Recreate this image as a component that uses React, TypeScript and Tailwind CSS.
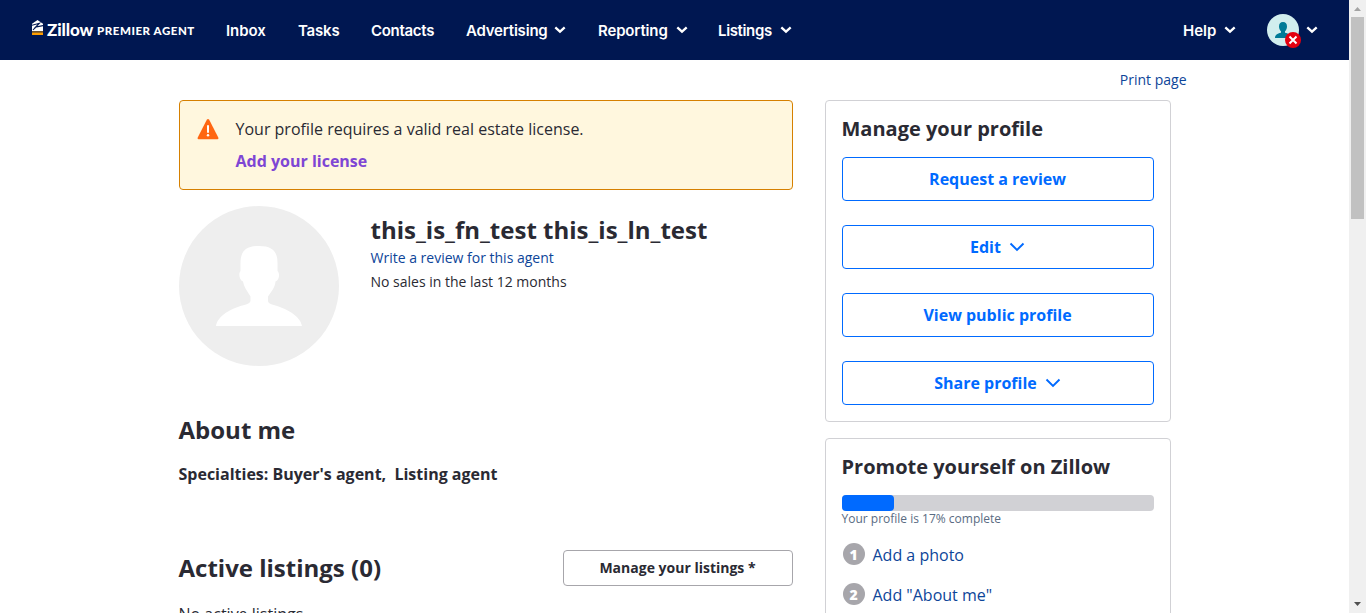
import React from "react";

function NavChevron() {
  return (
    <svg width="12" height="8" viewBox="0 0 12 8" fill="none" className="shrink-0">
      <path d="M1.3 1.4 L6 5.7 L10.7 1.4" stroke="#fff" strokeWidth="2.3" />
    </svg>
  );
}

function NavItem({ label, width, menu }: { label: string; width: string; menu?: boolean }) {
  return (
    <a className="flex items-center gap-2">
      <span className={`${width} pt-[3px] whitespace-nowrap`}>{label}</span>
      {menu && <NavChevron />}
    </a>
  );
}

function Logo() {
  return (
    <div className="flex h-4 w-[163px] items-center whitespace-nowrap">
      <svg width="11" height="16" viewBox="0 0 11 16" className="mr-1 shrink-0">
        <path d="M5.5 0 L11 3.8 V11 H0 V3.8 Z" fill="#fff" />
        <path d="M0 5.2 L7.4 3.2 L3.6 7.1 L11 5.6 M1 9.9 L4.8 6.3" stroke="#001751" strokeWidth="1.1" fill="none" />
        <rect y="11" width="11" height="1.5" fill="#6b532f" />
        <rect y="12.5" width="11" height="2.5" fill="#ff9e00" />
      </svg>
      <span className="w-[47px] pt-[3px] text-[17px] leading-4 font-black tracking-[-0.1px]">Zillow</span>
      <span className="ml-[3px] pt-[5px] text-[11.5px] leading-4 font-black tracking-[0.55px]">PREMIER AGENT</span>
    </div>
  );
}

function Header() {
  return (
    <header className="flex h-[60px] items-center bg-[#001751] pr-[31px] pl-8 font-[Inter,sans-serif] text-[15px] font-semibold text-white">
      <div className="-mt-[4px] font-[Lato,sans-serif]"><Logo /></div>
      <nav className="ml-[31px] flex items-center gap-8">
        <NavItem label="Inbox" width="w-10 tracking-[-0.05px]" />
        <NavItem label="Tasks" width="w-[41px] tracking-[-0.2px]" />
        <NavItem label="Contacts" width="w-[63px] tracking-[-0.3px]" />
        <NavItem label="Advertising" width="w-[80px] tracking-[-0.2px]" menu />
        <NavItem label="Reporting" width="w-[69.5px] tracking-[-0.15px]" menu />
        <NavItem label="Listings" width="-ml-[1.5px] w-[54px] tracking-[-0.35px]" menu />
      </nav>
      <div className="ml-auto flex items-center">
        <NavItem label="Help" width="w-[33px]" menu />
        <div className="relative ml-[31px] h-8 w-8">
          <svg width="32" height="32" viewBox="0 0 32 32">
            <circle cx="16" cy="16" r="16" fill="#d1eeee" />
            <path d="M16 8c2.700 0 4 1.700 4 4.400 0 2-.9 3.900-2 4.900v1.500c3.800.7 6 2.200 6 5.200H8c0-3 2.200-4.500 6-5.200v-1.500c-1.100-1-2-2.900-2-4.900C12 9.700 13.300 8 16 8Z" fill="#007b97" />
          </svg>
          <svg width="16" height="16" viewBox="0 0 16 16" className="absolute top-[18px] left-[18px]">
            <circle cx="8" cy="8" r="8" fill="#e4000f" />
            <path d="M4.5 4.5 L11.5 11.5 M11.5 4.5 L4.5 11.5" stroke="#fff" strokeWidth="2" />
          </svg>
        </div>
        <span className="ml-[7px] flex"><NavChevron /></span>
      </div>
    </header>
  );
}

function OutlineButton({ children, menu }: { children: React.ReactNode; menu?: boolean }) {
  return (
    <button className="flex h-11 w-full items-center justify-center rounded-[4px] border border-[#006aff] font-bold text-[#006aff]">
      {children}
      {menu && (
        <svg width="16" height="10" viewBox="0 0 16 10" fill="none" className="ml-2">
          <path d="M1.5 1.5 L8 8 L14.5 1.5" stroke="#006aff" strokeWidth="1.9" />
        </svg>
      )}
    </button>
  );
}

function Step({ n, label }: { n: number; label: string }) {
  return (
    <li className="flex h-10 items-start">
      <span className="ml-[1px] flex h-[22px] w-[22px] items-center justify-center rounded-full bg-[#a7a6ab] text-[14px] font-extrabold text-white">{n}</span>
      <a className="ml-2 leading-6 text-[#0d4599]">{label}</a>
    </li>
  );
}

function Sidebar() {
  return (
    <aside className="flex w-[346px] shrink-0 flex-col gap-4">
      <section className="h-[322px] rounded-[4px] border border-[#d1d1d5] px-4 pt-3">
        <h2 className="text-xl leading-8 font-bold">Manage your profile</h2>
        <div className="mt-3 flex flex-col gap-6">
          <OutlineButton>Request a review</OutlineButton>
          <OutlineButton menu>Edit</OutlineButton>
          <OutlineButton>View public profile</OutlineButton>
          <OutlineButton menu>Share profile</OutlineButton>
        </div>
      </section>
      <section className="h-[400px] rounded-[4px] border border-[#d1d1d5] px-4 pt-3">
        <h2 className="text-xl leading-8 font-bold">Promote yourself on Zillow</h2>
        <div className="mt-3 h-4 rounded-[4px] bg-[#d1d1d5]">
          <div className="h-4 w-[52px] rounded-[4px] bg-[#006aff]" />
        </div>
        <p className="text-xs leading-4 text-[#596b82]">Your profile is 17% complete</p>
        <ul className="mt-4">
          <Step n={1} label="Add a photo" />
          <Step n={2} label={'Add "About me"'} />
        </ul>
      </section>
    </aside>
  );
}

function LicenseAlert() {
  return (
    <div className="flex h-[90px] rounded-[4px] border border-[#d68000] bg-[#fff7de] pt-4 pl-[17px]">
      <svg width="22" height="21" viewBox="0 0 22 21" className="mt-[2px] shrink-0">
        <path d="M9.8 0.8 Q11 -0.7 12.2 0.8 L21.4 18.8 Q21.7 20.2 20.4 20.2 H1.6 Q0.3 20.2 0.6 18.8 Z" fill="#ff6712" />
        <path d="M11 7v6" stroke="#fff" strokeWidth="2" strokeLinecap="round" />
        <circle cx="11" cy="16.3" r="1.2" fill="#fff" />
      </svg>
      <div className="ml-[17px]">
        <p className="leading-6">Your profile requires a valid real estate license.</p>
        <a className="mt-2 block leading-6 font-bold text-[#7e46d4]">Add your license</a>
      </div>
    </div>
  );
}

function Profile() {
  return (
    <div className="mt-4 flex h-[160px]">
      <svg width="160" height="160" viewBox="0 0 160 160" className="shrink-0">
        <circle cx="80" cy="80" r="80" fill="#eee" />
        <path d="M80 40C67 40 61.5 45 61.5 57V65C59.5 67 60 74 64 75.5C65 81 68 85 71.5 90.5V95Q71 97 67 98.500C52 102 38.500 110 37 120H123C121.500 110 107 102 93 98.500Q89 97 89 95V90.500C93 85 96 81 96.500 75.500C100.500 74 101 67 98.500 65V57C98.500 45 93 40 80 40Z" fill="#fff" />
      </svg>
      <div className="ml-8 pt-2">
        <h1 className="text-2xl leading-8 font-bold">this_is_fn_test this_is_ln_test</h1>
        <a className="block text-sm leading-6 text-[#0d4599]">Write a review for this agent</a>
        <p className="text-sm leading-6">No sales in the last 12 months</p>
      </div>
    </div>
  );
}

function Scrollbar() {
  return (
    <div className="flex w-[17px] shrink-0 flex-col items-center bg-[#f0f0f0]">
      <svg width="17" height="17" viewBox="0 0 17 17"><path d="M5 11 L8.5 7 L12 11Z" fill="#a3a3a3" /></svg>
      <div className="h-[202px] w-[13px] bg-[#c1c1c1]" />
      <svg width="17" height="17" viewBox="0 0 17 17" className="mt-auto"><path d="M5 6 L8.5 10 L12 6Z" fill="#505050" /></svg>
    </div>
  );
}

export default function App() {
  return (
    <div className="flex h-[613px] w-[1366px] overflow-hidden bg-white font-['Open_Sans',sans-serif] text-base text-[#2a2a33]">
      <div className="h-full w-[1349px] shrink-0 overflow-hidden">
        <Header />
        <div className="flex h-10 items-center justify-end pr-[162.5px] text-sm text-[#0d4599]"><a>Print page</a></div>
        <div className="flex gap-8 pl-[178.5px]">
          <main className="w-[614px] shrink-0">
            <LicenseAlert />
            <Profile />
            <h2 className="mt-12 text-2xl leading-8 font-bold">About me</h2>
            <p className="mt-4 leading-6 font-bold whitespace-pre">Specialties: Buyer's agent,  Listing agent</p>
            <div className="mt-16 flex h-9 items-center justify-between">
              <h2 className="text-2xl leading-8 font-bold">Active listings (0)</h2>
              <button className="h-9 w-[230px] rounded-[4px] border border-[#a7a6ab] text-sm font-bold">Manage your listings *</button>
            </div>
            <p className="mt-4 leading-6">No active listings.</p>
          </main>
          <Sidebar />
        </div>
      </div>
      <Scrollbar />
    </div>
  );
}
